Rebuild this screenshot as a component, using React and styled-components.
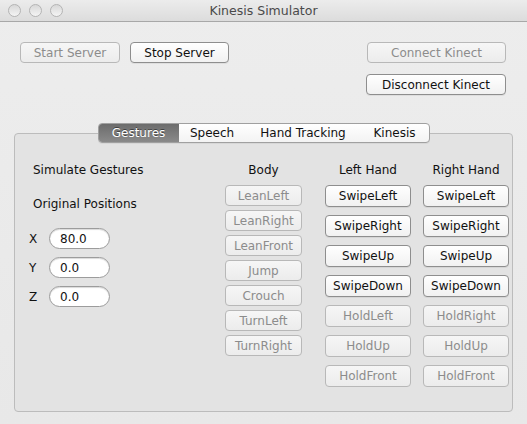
import styled, { createGlobalStyle, css } from "styled-components";

const GlobalStyle = createGlobalStyle`
	html, body {
		margin: 0;
		padding: 0;
		background: #ececec;
	}
	body {
		font-family: "DejaVu Sans", "Liberation Sans", sans-serif;
		font-size: 12px;
		color: #111;
	}
`;

const Window = styled.div`
	width: 527px;
	height: 424px;
	background: linear-gradient(#ededed, #e8e8e8);
	display: flex;
	flex-direction: column;
	overflow: hidden;
`;

const TitleBar = styled.div`
	height: 21px;
	border-bottom: 1px solid #a8a8a8;
	background: linear-gradient(#ececec, #dcdcdc);
	display: flex;
	align-items: center;
	padding: 0 8px;
`;

const Lights = styled.div`
	display: flex;
	gap: 8px;
	width: 60px;
`;

const Light = styled.span`
	width: 11px;
	height: 11px;
	border-radius: 50%;
	border: 1px solid #b4b4b4;
	background: linear-gradient(#d8d8d8, #f4f4f4);
`;

const Title = styled.div`
	flex: 1;
	text-align: center;
	margin-right: 60px;
	font-size: 12.5px;
	color: #4a4a4a;
`;

const TopArea = styled.div`
	display: flex;
	justify-content: space-between;
	align-items: flex-start;
	padding: 20px 21px 0 20px;
`;

const ButtonRow = styled.div`
	display: flex;
	gap: 10px;
`;

const ButtonStack = styled.div`
	display: flex;
	flex-direction: column;
	align-items: flex-end;
	gap: 11px;
`;

const Button = styled.button`
	box-sizing: border-box;
	width: ${(p) => p.$w}px;
	height: ${(p) => p.$h || 21}px;
	padding: 0;
	font-family: inherit;
	font-size: 12px;
	border-radius: 4px;
	border: 1px solid #8e8e8e;
	background: linear-gradient(#ffffff, #f1f1f1);
	color: #111;
	box-shadow: 0 1px 0 rgba(0, 0, 0, 0.06);
	white-space: nowrap;

	${(p) =>
		p.disabled &&
		css`
			border-color: #b8b8b8;
			background: linear-gradient(#f6f6f6, #ececec);
			color: #8c8c8c;
			box-shadow: none;
		`}
`;

const TabView = styled.div`
	margin: 28px 14px 0 14px;
	display: flex;
	flex-direction: column;
	align-items: center;
	flex: 1;
	margin-bottom: 12px;
`;

const TabStrip = styled.div`
	display: flex;
	height: 20px;
	box-sizing: border-box;
	border: 1px solid #a0a0a0;
	border-radius: 4px;
	background: linear-gradient(#ffffff, #f3f3f3);
	margin-bottom: -10px;
	position: relative;
	z-index: 1;
	overflow: hidden;
	box-shadow: 0 1px 0 rgba(0, 0, 0, 0.05);
`;

const Tab = styled.div`
	width: ${(p) => p.$w}px;
	display: flex;
	align-items: center;
	justify-content: center;
	font-size: 12px;
	color: #111;
	position: relative;

	& + &::before {
		content: "";
		position: absolute;
		left: 0;
		top: 3px;
		bottom: 3px;
		border-left: 1px solid #c6c6c6;
	}

	${(p) =>
		p.$active &&
		css`
			background: linear-gradient(#6c6c6c, #8a8a8a);
			color: #fff;
			text-shadow: 0 -1px 0 rgba(0, 0, 0, 0.45);
		`}
`;

const Panel = styled.div`
	align-self: stretch;
	flex: 1;
	border: 1px solid #bcbcbc;
	border-radius: 4px;
	background: #e3e3e3;
	padding: 28px 0 0 14px;
	display: flex;
`;

const LeftColumn = styled.div`
	width: 196px;
	display: flex;
	flex-direction: column;
`;

const Heading = styled.div`
	height: 16px;
	line-height: 16px;
	padding-left: 4px;
	font-size: 12px;
	margin-bottom: ${(p) => p.$gap || 0}px;
`;

const Fields = styled.div`
	display: flex;
	flex-direction: column;
	gap: 8px;
	margin-top: 16px;
`;

const FieldRow = styled.label`
	display: flex;
	align-items: center;
`;

const Axis = styled.span`
	width: 20px;
	font-size: 12px;
`;

const Field = styled.input`
	box-sizing: border-box;
	width: 61px;
	height: 21px;
	border-radius: 11px;
	border: 1px solid #9c9c9c;
	background: #fff;
	box-shadow: inset 0 1px 1px rgba(0, 0, 0, 0.15);
	padding: 0 0 0 10px;
	font-family: inherit;
	font-size: 12px;
	color: #111;
	outline: none;
`;

const GestureColumn = styled.div`
	width: ${(p) => p.$w}px;
	margin-right: ${(p) => p.$mr || 0}px;
	display: flex;
	flex-direction: column;
	align-items: stretch;
`;

const ColumnTitle = styled.div`
	height: 16px;
	line-height: 16px;
	text-align: center;
	font-size: 12px;
	margin-bottom: 7px;
`;

const ButtonList = styled.div`
	display: flex;
	flex-direction: column;
	gap: ${(p) => p.$gap}px;
`;

const body = ["LeanLeft", "LeanRight", "LeanFront", "Jump", "Crouch", "TurnLeft", "TurnRight"];

const leftHand = [
	["SwipeLeft", true],
	["SwipeRight", true],
	["SwipeUp", true],
	["SwipeDown", true],
	["HoldLeft", false],
	["HoldUp", false],
	["HoldFront", false],
];

const rightHand = [
	["SwipeLeft", true],
	["SwipeRight", true],
	["SwipeUp", true],
	["SwipeDown", true],
	["HoldRight", false],
	["HoldUp", false],
	["HoldFront", false],
];

const positions = [
	["X", "80.0"],
	["Y", "0.0"],
	["Z", "0.0"],
];

export default function App() {
	return (
		<>
			<GlobalStyle />
			<Window>
				<TitleBar>
					<Lights>
						<Light />
						<Light />
						<Light />
					</Lights>
					<Title>Kinesis Simulator</Title>
				</TitleBar>

				<TopArea>
					<ButtonRow>
						<Button $w={100} disabled>
							Start Server
						</Button>
						<Button $w={99}>Stop Server</Button>
					</ButtonRow>
					<ButtonStack>
						<Button $w={139} disabled>
							Connect Kinect
						</Button>
						<Button $w={140}>Disconnect Kinect</Button>
					</ButtonStack>
				</TopArea>

				<TabView>
					<TabStrip>
						<Tab $w={80} $active>
							Gestures
						</Tab>
						<Tab $w={67}>Speech</Tab>
						<Tab $w={115}>Hand Tracking</Tab>
						<Tab $w={68}>Kinesis</Tab>
					</TabStrip>
					<Panel>
						<LeftColumn>
							<Heading $gap={18}>Simulate Gestures</Heading>
							<Heading>Original Positions</Heading>
							<Fields>
								{positions.map(([axis, value]) => (
									<FieldRow key={axis}>
										<Axis>{axis}</Axis>
										<Field defaultValue={value} />
									</FieldRow>
								))}
							</Fields>
						</LeftColumn>

						<GestureColumn $w={77} $mr={23}>
							<ColumnTitle>Body</ColumnTitle>
							<ButtonList $gap={4}>
								{body.map((name) => (
									<Button key={name} $w={77} disabled>
										{name}
									</Button>
								))}
							</ButtonList>
						</GestureColumn>

						<GestureColumn $w={86} $mr={12}>
							<ColumnTitle>Left Hand</ColumnTitle>
							<ButtonList $gap={8}>
								{leftHand.map(([name, on]) => (
									<Button key={name} $w={86} $h={22} disabled={!on}>
										{name}
									</Button>
								))}
							</ButtonList>
						</GestureColumn>

						<GestureColumn $w={86}>
							<ColumnTitle>Right Hand</ColumnTitle>
							<ButtonList $gap={8}>
								{rightHand.map(([name, on]) => (
									<Button key={name} $w={86} $h={22} disabled={!on}>
										{name}
									</Button>
								))}
							</ButtonList>
						</GestureColumn>
					</Panel>
				</TabView>
			</Window>
		</>
	);
}
